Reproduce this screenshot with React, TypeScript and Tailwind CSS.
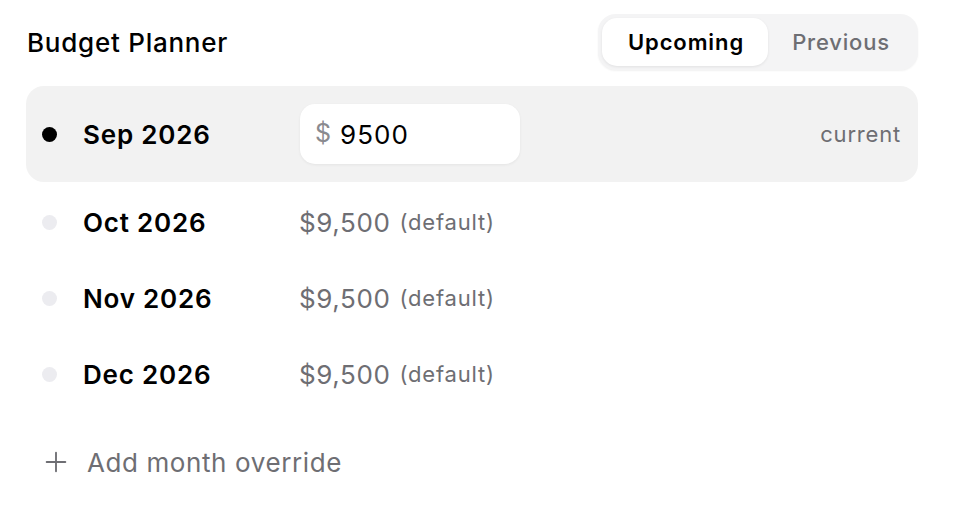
import { Plus } from "lucide-react";

const months = [
  { label: "Oct 2026", amount: "$9,500" },
  { label: "Nov 2026", amount: "$9,500" },
  { label: "Dec 2026", amount: "$9,500" },
];

export default function App() {
  return (
    <div className="min-h-screen bg-white font-['Inter',sans-serif] text-black">
      <div className="w-[892px] ml-[26px] pt-[13px]">
        <div className="flex items-center justify-between h-[58px]">
          <h1 className="text-[26px] font-medium tracking-[0.75px] pl-px">Budget Planner</h1>
          <div className="flex items-center p-[4px] rounded-[18px] bg-[#f4f4f5] shadow-[0_1px_2px_rgba(0,0,0,0.06)]">
            <button className="h-[48px] w-[166px] pl-[2px] rounded-[15px] bg-white text-[22px] font-[560] tracking-[0.9px] shadow-[0_1px_3px_rgba(0,0,0,0.08)]">
              Upcoming
            </button>
            <button className="h-[48px] w-[146px] text-[22px] font-medium tracking-[0.8px] text-[#6e6e73]">
              Previous
            </button>
          </div>
        </div>

        <div className="mt-[15px] flex items-center h-[96px] rounded-[18px] bg-[#f2f2f2] pl-4 pr-[17px]">
          <span className="w-[15px] h-[15px] rounded-full bg-black" />
          <span className="ml-[26px] w-[217px] text-[26px] font-[560] tracking-[0.8px]">Sep 2026</span>
          <div className="flex items-center w-[220px] h-[60px] rounded-[15px] bg-white px-[15px] shadow-[0_1px_3px_rgba(0,0,0,0.06)]">
            <span className="text-[25px] text-[#8a8a8f]">$</span>
            <span className="ml-[9px] text-[26px] tracking-[1px]">9500</span>
          </div>
          <span className="ml-auto text-[22px] tracking-[0.8px] text-[#6e6e73]">current</span>
        </div>

        <div className="mt-[2px]">
          {months.map((m) => (
            <div key={m.label} className="flex items-center h-[76px] pl-4">
              <span className="w-[15px] h-[15px] rounded-full bg-[#ececf0]" />
              <span className="ml-[26px] w-[216px] text-[26px] font-[560] tracking-[0.8px]">{m.label}</span>
              <span className="text-[26px] tracking-[0.6px] text-[#6e6e73]">{m.amount}</span>
              <span className="ml-[9px] text-[22px] tracking-[0.8px] text-[#6e6e73]">(default)</span>
            </div>
          ))}
        </div>

        <button className="mt-[14px] flex items-center h-[72px] pl-[14px] text-[#6e6e73]">
          <Plus className="w-[32px] h-[32px]" strokeWidth={1.4} />
          <span className="ml-[15px] text-[26px] tracking-[0.6px]">Add month override</span>
        </button>
      </div>
    </div>
  );
}
